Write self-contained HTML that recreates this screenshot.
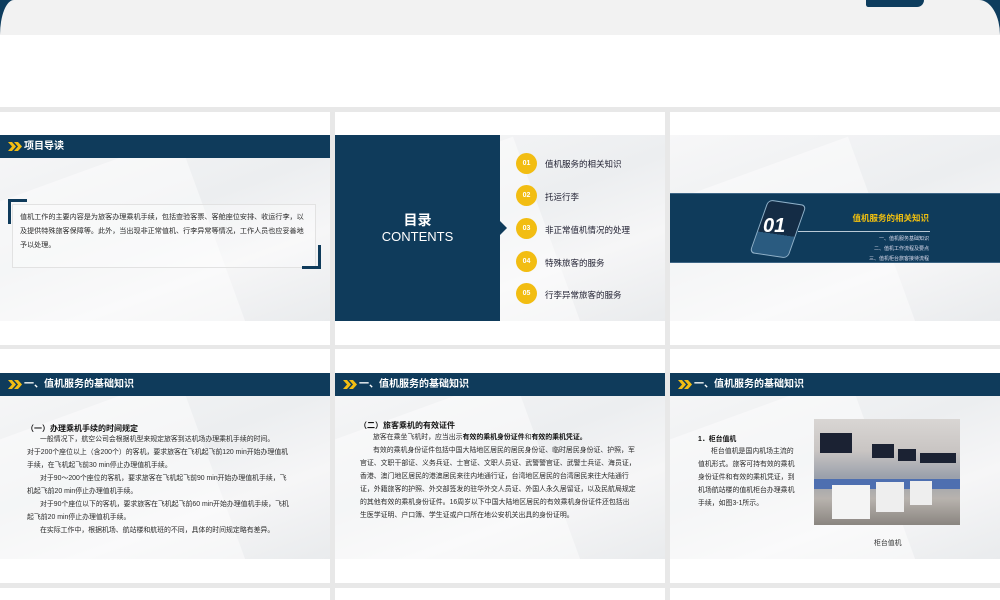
<!DOCTYPE html>
<html><head><meta charset="utf-8">
<style>
*{margin:0;padding:0;box-sizing:border-box}
body{width:1000px;height:600px;overflow:hidden;background:#e8e8e8;font-family:"Liberation Sans","Noto Sans CJK SC",sans-serif;position:relative}
.abs{position:absolute}
.cell{position:absolute;background:#fff}
.slide{position:absolute;left:0;width:330px;height:186px;background:linear-gradient(160deg,#f7f7f8 0%,#eceef0 45%,#f6f6f7 70%,#e9ebed 100%);overflow:hidden}
.slide:before{content:"";position:absolute;left:-40px;top:40px;width:260px;height:200px;background:rgba(255,255,255,.45);transform:rotate(-20deg)}
.hdr{position:absolute;left:0;top:0;width:330px;height:23px;background:#0f3b5b;color:#fff;font-size:10px;font-weight:bold;line-height:23px;padding-left:24px}
.chev{position:absolute;left:8px;top:7px;width:14px;height:9px}
.t{font-size:6.9px;color:#2a2a2a;line-height:13px}
.b{font-weight:bold;color:#111}
.circ{position:absolute;left:516px;width:21px;height:21px;border-radius:50%;background:#f2bd12;color:#fff;font-size:7px;font-weight:bold;text-align:center;line-height:21px}
.ci{position:absolute;left:545px;font-size:8.5px;color:#223;}
</style></head><body>
<div class="abs" style="left:0;top:0;width:1000px;height:35px;background:#0e3d5e"></div>
<div class="abs" style="left:0;top:0;width:1000px;height:35px;background:#f2f2f2;border-radius:16px 24px 0 0/40px 40px 0 0"></div>
<div class="abs" style="left:866px;top:0;width:58px;height:7px;background:#0e3d5e;border-radius:0 0 18px 6px"></div>
<div class="abs" style="left:0;top:35px;width:1000px;height:72px;background:#fff"></div>

<div class="cell" style="left:0;top:112px;width:330px;height:233px"><div class="slide" style="top:23px">
 <div class="hdr"><svg class="chev" viewBox="0 0 14 9"><path d="M0 0h4l4 4.5-4 4.5H0l4-4.5z M6 0h4l4 4.5-4 4.5H6l4-4.5z" fill="#f2bd12"/></svg>项目导读</div>
 <div class="abs" style="left:12px;top:69px;width:304px;height:64px;border:1px solid #e2e2e2;background:rgba(255,255,255,.3)"></div>
 <div class="abs" style="left:8px;top:64px;width:19px;height:3px;background:#0f3b5b"></div>
 <div class="abs" style="left:8px;top:64px;width:3px;height:25px;background:#0f3b5b"></div>
 <div class="abs" style="left:302px;top:131px;width:19px;height:3px;background:#0f3b5b"></div>
 <div class="abs" style="left:318px;top:110px;width:3px;height:24px;background:#0f3b5b"></div>
 <div class="abs t" style="left:20px;top:75px;width:288px;line-height:14px;font-size:7.1px">值机工作的主要内容是为旅客办理乘机手续，包括查验客票、客舱座位安排、收运行李，以及提供特殊旅客保障等。此外，当出现非正常值机、行李异常等情况，工作人员也应妥善地予以处理。</div>
</div></div>

<div class="cell" style="left:335px;top:112px;width:330px;height:233px"><div class="slide" style="top:23px">
 <div class="abs" style="left:0;top:0;width:165px;height:186px;background:#0f3b5b"></div>
 <div class="abs" style="left:165px;top:86px;width:0;height:0;border-top:7px solid transparent;border-bottom:7px solid transparent;border-left:7px solid #0f3b5b"></div>
 <div class="abs" style="left:0;top:75px;width:165px;text-align:center;color:#fff;font-size:14px;font-weight:bold">目录</div>
 <div class="abs" style="left:0;top:94px;width:165px;text-align:center;color:#fff;font-size:13px">CONTENTS</div>
</div></div>
<div class="circ" style="top:153px">01</div><div class="ci" style="top:158px">值机服务的相关知识</div>
<div class="circ" style="top:185px">02</div><div class="ci" style="top:191px">托运行李</div>
<div class="circ" style="top:218px">03</div><div class="ci" style="top:224px">非正常值机情况的处理</div>
<div class="circ" style="top:251px">04</div><div class="ci" style="top:257px">特殊旅客的服务</div>
<div class="circ" style="top:283px">05</div><div class="ci" style="top:289px">行李异常旅客的服务</div>

<div class="cell" style="left:670px;top:112px;width:330px;height:233px"><div class="slide" style="top:23px">
 <div class="abs" style="left:0;top:58px;width:330px;height:70px;background:#0f3b5b;border-top:1px solid #3d6585;border-bottom:1px solid #3d6585"></div>
 <div class="abs" style="left:88px;top:67px;width:40px;height:54px;border:1px solid #8fb0c8;border-radius:5px;transform:skewX(-12deg) rotate(8deg);background:linear-gradient(#142c45 60%,#2a5b80 60%)"></div>
 <div class="abs" style="left:93px;top:80px;color:#fff;font-size:20px;font-weight:bold;font-style:italic">01</div>
 <div class="abs" style="left:128px;top:96px;width:132px;height:1px;background:#b9c9d6"></div>
 <div class="abs" style="left:140px;top:77px;width:119px;text-align:right;color:#f2c00f;font-size:8.5px;font-weight:bold">值机服务的相关知识</div>
 <div class="abs" style="left:140px;top:99px;width:119px;text-align:right;color:#dde;font-size:5px;line-height:10px">一、值机服务基础知识<br>二、值机工作流程及要点<br>三、值机柜台旅客接待流程</div>
</div></div>

<div class="cell" style="left:0;top:349px;width:330px;height:234px"><div class="slide" style="top:24px">
 <div class="hdr"><svg class="chev" viewBox="0 0 14 9"><path d="M0 0h4l4 4.5-4 4.5H0l4-4.5z M6 0h4l4 4.5-4 4.5H6l4-4.5z" fill="#f2bd12"/></svg>一、值机服务的基础知识</div>
 <div class="abs b" style="left:26px;top:50px;font-size:8px">（一）办理乘机手续的时间规定</div>
 <div class="abs t" style="left:27px;top:60px;width:262px;text-indent:13px">一般情况下，航空公司会根据机型来规定旅客到达机场办理乘机手续的时间。<br>对于200个座位以上（含200个）的客机，要求旅客在飞机起飞前120 min开始办理值机手续，在飞机起飞前30 min停止办理值机手续。</div>
 <div class="abs t" style="left:27px;top:99px;width:262px;text-indent:13px">对于90～200个座位的客机，要求旅客在飞机起飞前90 min开始办理值机手续，飞机起飞前20 min停止办理值机手续。</div>
 <div class="abs t" style="left:27px;top:125px;width:262px;text-indent:13px">对于90个座位以下的客机，要求旅客在飞机起飞前60 min开始办理值机手续，飞机起飞前20 min停止办理值机手续。</div>
 <div class="abs t" style="left:27px;top:151px;width:262px;text-indent:13px">在实际工作中，根据机场、航站楼和航班的不同，具体的时间规定略有差异。</div>
</div></div>

<div class="cell" style="left:335px;top:349px;width:330px;height:234px"><div class="slide" style="top:24px">
 <div class="hdr"><svg class="chev" viewBox="0 0 14 9"><path d="M0 0h4l4 4.5-4 4.5H0l4-4.5z M6 0h4l4 4.5-4 4.5H6l4-4.5z" fill="#f2bd12"/></svg>一、值机服务的基础知识</div>
 <div class="abs b" style="left:24px;top:47px;font-size:8px">（二）旅客乘机的有效证件</div>
 <div class="abs t" style="left:25px;top:58px;width:276px;text-indent:13px">旅客在乘坐飞机时，应当出示<span class="b">有效的乘机身份证件</span>和<span class="b">有效的乘机凭证。</span></div>
 <div class="abs t" style="left:25px;top:71px;width:276px;text-indent:13px">有效的乘机身份证件包括中国大陆地区居民的居民身份证、临时居民身份证、护照，军官证、文职干部证、义务兵证、士官证、文职人员证、武警警官证、武警士兵证、海员证，香港、澳门地区居民的港澳居民来往内地通行证，台湾地区居民的台湾居民来往大陆通行证，外籍旅客的护照、外交部签发的驻华外交人员证、外国人永久居留证，以及民航局规定的其他有效的乘机身份证件。16周岁以下中国大陆地区居民的有效乘机身份证件还包括出生医学证明、户口簿、学生证或户口所在地公安机关出具的身份证明。</div>
</div></div>

<div class="cell" style="left:670px;top:349px;width:330px;height:234px"><div class="slide" style="top:24px">
 <div class="hdr"><svg class="chev" viewBox="0 0 14 9"><path d="M0 0h4l4 4.5-4 4.5H0l4-4.5z M6 0h4l4 4.5-4 4.5H6l4-4.5z" fill="#f2bd12"/></svg>一、值机服务的基础知识</div>
 <div class="abs b" style="left:28px;top:60px;font-size:6.9px">1．柜台值机</div>
 <div class="abs t" style="left:28px;top:72px;width:100px;text-indent:13px">柜台值机是国内机场主流的值机形式。旅客可持有效的乘机身份证件和有效的乘机凭证，到机场航站楼的值机柜台办理乘机手续，如图3-1所示。</div>
 <div class="abs" style="left:144px;top:46px;width:146px;height:106px;background:linear-gradient(180deg,#d9d6d4 0%,#c9c5c3 30%,#9aa0ab 55%,#b8b3ae 75%,#8a8580 100%);overflow:hidden">
  <div class="abs" style="left:6px;top:14px;width:32px;height:20px;background:#1b2233"></div>
  <div class="abs" style="left:58px;top:25px;width:22px;height:14px;background:#1b2233"></div>
  <div class="abs" style="left:84px;top:30px;width:18px;height:12px;background:#1b2233"></div>
  <div class="abs" style="left:106px;top:34px;width:36px;height:10px;background:#1b2233"></div>
  <div class="abs" style="left:0;top:60px;width:146px;height:10px;background:#4e6fb0"></div>
  <div class="abs" style="left:18px;top:66px;width:38px;height:34px;background:#f4f4f4"></div>
  <div class="abs" style="left:62px;top:63px;width:28px;height:30px;background:#eee"></div>
  <div class="abs" style="left:96px;top:62px;width:22px;height:24px;background:#eee"></div>
 </div>
 <div class="abs" style="left:204px;top:164px;font-size:6.9px;color:#333">柜台值机</div>
</div></div>

<div class="cell" style="left:0;top:588px;width:330px;height:12px"></div>
<div class="cell" style="left:335px;top:588px;width:330px;height:12px"></div>
<div class="cell" style="left:670px;top:588px;width:330px;height:12px"></div>
</body></html>
